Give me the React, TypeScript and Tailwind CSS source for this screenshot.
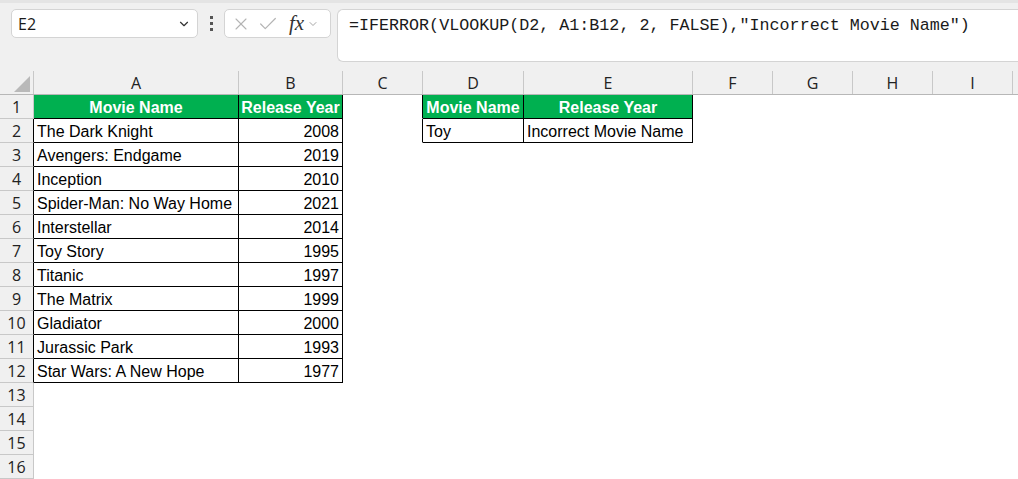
import { X, Check, ChevronDown } from "lucide-react";

const COLS = [
  { key: "A", w: "w-[205px]" },
  { key: "B", w: "w-[104px]" },
  { key: "C", w: "w-[80px]" },
  { key: "D", w: "w-[101px]" },
  { key: "E", w: "w-[169px]" },
  { key: "F", w: "w-[80px]" },
  { key: "G", w: "w-[80px]" },
  { key: "H", w: "w-[80px]" },
  { key: "I", w: "w-[80px]" },
  { key: "", w: "w-[80px]" },
];

const movies: [string, number][] = [
  ["The Dark Knight", 2008],
  ["Avengers: Endgame", 2019],
  ["Inception", 2010],
  ["Spider-Man: No Way Home", 2021],
  ["Interstellar", 2014],
  ["Toy Story", 1995],
  ["Titanic", 1997],
  ["The Matrix", 1999],
  ["Gladiator", 2000],
  ["Jurassic Park", 1993],
  ["Star Wars: A New Hope", 1977],
];

type Cell = {
  text?: string;
  head?: boolean;
  right?: boolean;
  br?: boolean; // black right border
  bb?: boolean; // black bottom border
};

function buildRow(r: number): Cell[] {
  const cells: Cell[] = COLS.map(() => ({}));
  if (r === 1) {
    cells[0] = { text: "Movie Name", head: true, br: true, bb: true };
    cells[1] = { text: "Release Year", head: true, br: true, bb: true };
  } else if (r <= 12) {
    const [name, year] = movies[r - 2];
    cells[0] = { text: name, br: true, bb: true };
    cells[1] = { text: String(year), right: true, br: true, bb: true };
  }
  if (r === 1) {
    cells[2] = { br: true };
    cells[3] = { text: "Movie Name", head: true, br: true, bb: true };
    cells[4] = { text: "Release Year", head: true, br: true, bb: true };
  }
  if (r === 2) {
    cells[2] = { br: true };
    cells[3] = { text: "Toy", br: true, bb: true };
    cells[4] = { text: "Incorrect Movie Name", br: true, bb: true };
  }
  return cells;
}

function SheetCell({ c, w }: { c: Cell; w: string }) {
  return (
    <div
      className={`${w} h-[24px] shrink-0 flex items-center pt-[2px] overflow-hidden whitespace-nowrap border-r border-b px-[3px] text-[16px] ${
        c.br ? "border-r-black" : "border-r-transparent"
      } ${c.bb ? "border-b-black" : "border-b-transparent"} ${
        c.head ? "bg-[#00b050] text-white font-bold justify-center" : "text-black"
      } ${c.right ? "justify-end" : ""}`}
    >
      {c.text}
    </div>
  );
}

export default function App() {
  const rows = Array.from({ length: 16 }, (_, i) => i + 1);

  return (
    <div className="w-[1018px] h-[479px] overflow-hidden bg-white font-['Liberation_Sans',Arial,sans-serif]">
      {/* toolbar / formula bar */}
      <div className="h-[71px] bg-[#f0f0f0] border-t-[3px] border-[#e4e4e4] flex items-start pt-[6px]">
        <div className="ml-[11px] w-[187px] h-[29px] bg-white border border-[#d4d4d4] rounded-[5px] flex items-center pl-[6px] pr-[6px]">
          <span className="text-[16px] text-[#1a1a1a] font-['Open_Sans',sans-serif] flex-1">E2</span>
          <ChevronDown className="w-[14px] h-[14px] text-[#333]" strokeWidth={2} />
        </div>
        <div className="w-[26px] h-[29px] flex flex-col items-center justify-center gap-[3px]">
          <span className="w-[3px] h-[3px] bg-[#555]" />
          <span className="w-[3px] h-[3px] bg-[#555]" />
          <span className="w-[3px] h-[3px] bg-[#555]" />
        </div>
        <div className="w-[107px] h-[29px] bg-white border border-[#d4d4d4] rounded-[5px] flex items-center pl-[6px]">
          <X className="w-[20px] h-[20px] text-[#b4b4b4]" strokeWidth={1.3} />
          <Check className="w-[22px] h-[22px] ml-[6px] text-[#b4b4b4]" strokeWidth={1.3} />
          <span className="ml-[10px] text-[21px] italic text-[#333] font-['Liberation_Serif',serif] leading-none">fx</span>
          <ChevronDown className="ml-[3px] w-[12px] h-[12px] text-[#888]" strokeWidth={1.5} />
        </div>
        <div className="ml-[6px] flex-1 h-[53px] bg-white border border-[#d4d4d4] border-r-0 rounded-l-[6px] pl-[11px] pt-[3px]">
          <span className="text-[16.7px] text-[#1a1a1a] font-['Liberation_Mono',monospace] whitespace-pre">
            =IFERROR(VLOOKUP(D2, A1:B12, 2, FALSE),"Incorrect Movie Name")
          </span>
        </div>
      </div>

      {/* column headers */}
      <div className="flex h-[24px] bg-[#f0f0f0] border-b border-[#b7b7b7]">
        <div className="w-[34px] h-[23px] shrink-0 border-r border-[#c8c8c8] relative">
          <svg className="absolute left-[14px] top-[5px]" width="16" height="16" viewBox="0 0 16 16">
            <polygon points="16,0 16,16 0,16" fill="#b9b9b9" />
          </svg>
        </div>
        {COLS.map((c, i) => (
          <div
            key={i}
            className={`${c.w} h-[23px] shrink-0 border-r border-[#c8c8c8] flex items-center justify-center pt-[1px] text-[16px] text-[#222] font-['Open_Sans',sans-serif]`}
          >
            {c.key}
          </div>
        ))}
      </div>

      {/* rows */}
      {rows.map((r) => {
        const cells = buildRow(r);
        return (
          <div key={r} className="flex h-[24px]">
            <div
              className={`w-[34px] h-[24px] shrink-0 bg-[#f0f0f0] border-b border-b-[#c8c8c8] border-r flex items-center justify-center pt-[1px] text-[16px] text-[#222] font-['Open_Sans',sans-serif] ${
                r >= 2 && r <= 12 ? "border-r-black" : "border-r-[#c8c8c8]"
              }`}
            >
              {r}
            </div>
            {cells.map((c, i) => (
              <SheetCell key={i} c={c} w={COLS[i].w} />
            ))}
          </div>
        );
      })}
    </div>
  );
}
